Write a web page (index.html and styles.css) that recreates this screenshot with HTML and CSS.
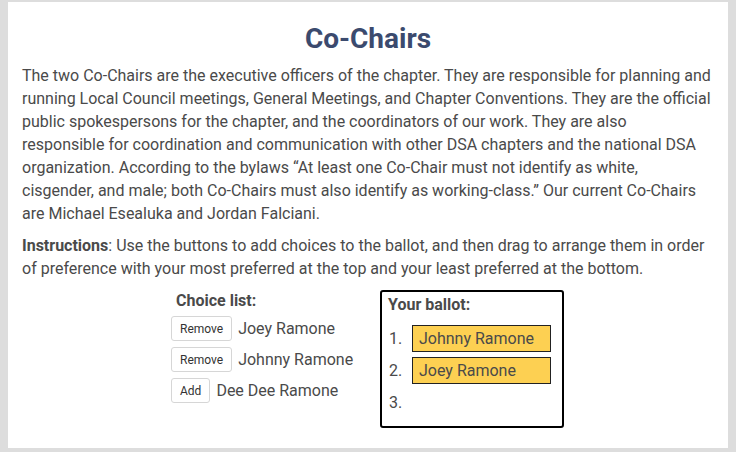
FILE: index.html
```html
<!DOCTYPE html>
<html>
<head>
<meta charset="utf-8">
<link rel="stylesheet" href="styles.css">
</head>
<body>
<div class="panel">
  <h1 class="title">Co-Chairs</h1>
  <p class="desc">The two Co-Chairs are the executive officers of the chapter. They are responsible for planning and running Local Council meetings, General Meetings, and Chapter Conventions. They are the official public spokespersons for the chapter, and the coordinators of our work. They are also responsible for coordination and communication with other DSA chapters and the national DSA organization. According to the bylaws “At least one Co-Chair must not identify as white, cisgender, and male; both Co-Chairs must also identify as working-class.” Our current Co-Chairs are Michael Esealuka and Jordan Falciani.</p>
  <p class="desc instr"><strong>Instructions</strong>: Use the buttons to add choices to the ballot, and then drag to arrange them in order of preference with your most preferred at the top and your least preferred at the bottom.</p>
  <div class="voting">
    <div class="choices">
      <div class="label choices-label">Choice list:</div>
      <div class="choice"><button class="btn">Remove</button><span>Joey Ramone</span></div>
      <div class="choice"><button class="btn">Remove</button><span>Johnny Ramone</span></div>
      <div class="choice"><button class="btn">Add</button><span>Dee Dee Ramone</span></div>
    </div>
    <div class="ballot">
      <div class="label">Your ballot:</div>
      <ol class="ranks">
        <li class="rank"><span class="num">1.</span><span class="slot">Johnny Ramone</span></li>
        <li class="rank"><span class="num">2.</span><span class="slot">Joey Ramone</span></li>
        <li class="rank"><span class="num">3.</span></li>
      </ol>
    </div>
  </div>
</div>
</body>
</html>
```
FILE: styles.css
```css
html, body {
  margin: 0;
  padding: 0;
  background: #dddddd;
}
body {
  padding: 2px 8px 4px 8px;
  font-family: Roboto, "Liberation Sans", sans-serif;
  color: #4a4a4a;
  font-size: 16px;
}
.panel {
  background: #ffffff;
  width: 690px;
  height: 446px;
  padding: 0 16px 0 14px;
  box-sizing: content-box;
}
.title {
  margin: 0 -2px 0 0;
  padding-top: 20px;
  text-align: center;
  font-size: 28px;
  line-height: 34px;
  font-weight: 700;
  color: #3b4a6e;
}
.desc {
  margin: 8px 0 0 0;
  line-height: 23px;
}
.instr {
  margin-top: 9px;
}
.voting {
  display: flex;
  justify-content: center;
  gap: 28px;
  margin: 10px -4px 0 -3px;
}
.choices {
  width: 181px;
  padding-top: 2px;
}
.label {
  font-weight: 700;
  line-height: 18px;
}
.choices-label {
  padding-left: 5px;
}
.choice {
  display: flex;
  align-items: center;
  gap: 6px;
  margin-top: 6px;
  height: 25px;
  white-space: nowrap;
}
.btn {
  font-family: Roboto, "Liberation Sans", sans-serif;
  font-size: 12px;
  color: #333;
  background: #fff;
  border: 1px solid #d6d6d6;
  border-radius: 3px;
  height: 25px;
  padding: 0 8px;
  flex: none;
}
.ballot {
  width: 184px;
  height: 138px;
  border: 2px solid #000;
  border-radius: 3px;
  padding: 4px 0 0 6px;
  box-sizing: border-box;
  flex: none;
}
.ranks {
  list-style: none;
  margin: 11px 0 0 0;
  padding: 0;
}
.rank {
  display: flex;
  align-items: center;
  height: 27px;
  margin-bottom: 5px;
}
.num {
  width: 23px;
  padding-left: 1px;
}
.slot {
  height: 25px;
  line-height: 25px;
  border: 1px solid #222;
  background: #fdd052;
  padding-left: 6px;
  width: 131px;
}
```
